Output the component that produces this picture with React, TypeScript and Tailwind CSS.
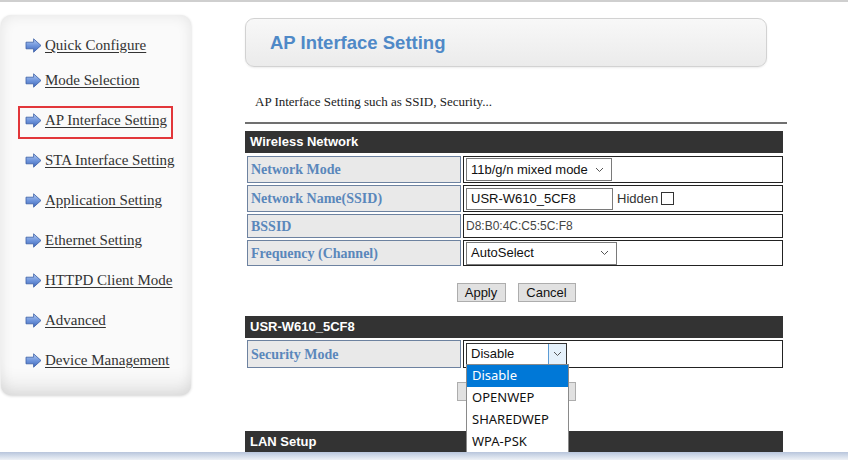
import React from "react";

const menu = [
  "Quick Configure",
  "Mode Selection",
  "AP Interface Setting",
  "STA Interface Setting",
  "Application Setting",
  "Ethernet Setting",
  "HTTPD Client Mode",
  "Advanced",
  "Device Management",
];

const Arrow = () => (
  <svg width="17" height="15" viewBox="0 0 17 15" className="shrink-0">
    <defs>
      <linearGradient id="arrowFill" x1="0" y1="0" x2="0" y2="1">
        <stop offset="0" stopColor="#b3cbf3" />
        <stop offset="0.5" stopColor="#7096dc" />
        <stop offset="1" stopColor="#3f68bd" />
      </linearGradient>
    </defs>
    <polygon
      points="1,4.2 8.6,4.2 8.6,0.8 16,7.5 8.6,14.2 8.6,10.8 1,10.8"
      fill="url(#arrowFill)"
      stroke="#3a5ea5"
      strokeWidth="0.8"
      strokeLinejoin="round"
    />
  </svg>
);

const Chevron = () => (
  <svg width="9" height="6" viewBox="0 0 9 6">
    <polyline points="1,1 4.5,4.5 8,1" fill="none" stroke="#555" strokeWidth="1" />
  </svg>
);

const serif = "font-['Liberation_Serif',serif]";
const sans = "font-['Liberation_Sans',Arial,sans-serif]";

const Bar = ({ title, className = "" }: { title: string; className?: string }) => (
  <div
    className={`h-[22px] bg-[#333333] flex items-center pl-[5px] text-white font-bold text-[13px] ${sans} ${className}`}
  >
    {title}
  </div>
);

const Row = ({
  label,
  h,
  children,
}: {
  label: string;
  h: string;
  children: React.ReactNode;
}) => (
  <div className={`flex pl-[2px] gap-[2px] ${h}`}>
    <div
      className={`w-[214px] bg-[#e9e9e9] border border-[#6d82a0] flex items-center pl-[3px] font-bold text-[14px] text-[#5a87bb] ${serif}`}
    >
      {label}
    </div>
    <div className="flex-1 border border-[#222] flex items-center pl-[2px]">{children}</div>
  </div>
);

const Select = ({ value, w }: { value: string; w: string }) => (
  <div
    className={`${w} h-[23px] border border-[#7a7a7a] bg-white flex items-center justify-between pl-[4px] pr-[7px] text-[13px] text-[#111] ${sans}`}
  >
    <span>{value}</span>
    <Chevron />
  </div>
);

// second pair sits behind the open dropdown, so its labels are not visible
const Buttons = ({ className = "", hidden = false }: { className?: string; hidden?: boolean }) => (
  <div className={`flex justify-center gap-[12px] pl-[4px] ${className}`}>
    <button className={`w-[49px] h-[19px] bg-[#e1e1e1] border border-[#adadad] text-[13px] leading-none text-[#111] ${sans}`}>
      {hidden ? "" : "Apply"}
    </button>
    <button className={`w-[58px] h-[19px] bg-[#e1e1e1] border border-[#adadad] text-[13px] leading-none text-[#111] ${sans}`}>
      {hidden ? "" : "Cancel"}
    </button>
  </div>
);

export default function App() {
  return (
    <div className="w-[848px] h-[460px] overflow-hidden bg-white flex flex-col">
      <div className="h-[2px] bg-[#cfcfcf] shrink-0" />

      <div className="flex-1 min-h-0 flex overflow-hidden">
        {/* sidebar */}
        <div className="w-[245px] shrink-0 pl-[1px] pt-[13px]">
          <div className="w-[190px] h-[380px] rounded-[10px] bg-[#fafafa] shadow-[inset_0_0_14px_rgba(0,0,0,0.09),inset_0_-26px_18px_-14px_rgba(0,0,0,0.07),0_1px_3px_rgba(0,0,0,0.18)] pt-[20px] flex flex-col gap-[20px]">
            {menu.map((item, idx) => (
              <div
                key={idx}
                className={`relative h-[20px] flex items-center pl-[24px] gap-[3px] ${idx === 0 ? "-mb-[5px]" : ""}`}
              >
                {idx === 2 && (
                  <div className="absolute left-[17px] top-[-4px] w-[155px] h-[33px] border-2 border-[#e2363a]" />
                )}
                <Arrow />
                <a className={`text-[15px] text-[#333] underline underline-offset-2 ${serif}`}>{item}</a>
              </div>
            ))}
          </div>
        </div>

        {/* content */}
        <div className="w-[542px] shrink-0 pt-[16px] flex flex-col">
          <div className="w-[522px] h-[49px] shrink-0 rounded-[9px] border border-[#d2d2d2] bg-gradient-to-b from-[#f8f8f8] to-[#ebebeb] shadow-[0_1px_2px_rgba(0,0,0,0.08)] flex items-center pl-[24px]">
            <h1 className={`text-[18.5px] font-bold text-[#4f89c7] ${sans}`}>AP Interface Setting</h1>
          </div>

          <p className={`mt-[28px] h-[14px] leading-[14px] pl-[10px] text-[13px] text-[#222] ${serif}`}>
            AP Interface Setting such as SSID, Security...
          </p>

          <div className="mt-[13px] h-[2px] bg-[#707070] shrink-0" />

          <div className="mt-[7px] w-[538px] flex flex-col">
            <Bar title="Wireless Network" className="h-[21px]" />
            <div className="mt-[3px] flex flex-col gap-[2px]">
              <Row label="Network Mode" h="h-[27px]">
                <Select value="11b/g/n mixed mode" w="w-[146px]" />
              </Row>
              <Row label="Network Name(SSID)" h="h-[27px]">
                <div className={`w-[147px] h-[22px] border border-[#7a7a7a] flex items-center px-[4px] text-[13px] text-[#111] ${sans}`}>
                  USR-W610_5CF8
                </div>
                <span className={`ml-[4px] text-[13px] text-[#333] ${sans}`}>Hidden</span>
                <div className="ml-[3px] w-[13px] h-[13px] border border-[#333] bg-white" />
              </Row>
              <Row label="BSSID" h="h-[24px]">
                <span className={`text-[12px] text-[#444] ${sans}`}>D8:B0:4C:C5:5C:F8</span>
              </Row>
              <Row label="Frequency (Channel)" h="h-[26px]">
                <Select value="AutoSelect" w="w-[151px]" />
              </Row>
            </div>

            <Buttons className="mt-[17px]" />

            <Bar title="USR-W610_5CF8" className="mt-[14px]" />
            <div className="mt-[2px]">
              <Row label="Security Mode" h="h-[28px]">
                <div className="relative">
                  <div className={`w-[101px] h-[22px] border border-[#333] bg-white flex items-center text-[13px] text-[#111] ${sans}`}>
                    <span className="flex-1 pl-[4px]">Disable</span>
                    <div className="w-[18px] h-full border-l border-[#5b9bd5] bg-[#e5f1fb] flex items-center justify-center">
                      <Chevron />
                    </div>
                  </div>
                  <div className="absolute left-0 top-[21px] z-10 w-[103px] bg-white border border-[#8a8a8a] flex flex-col font-['Noto_Sans',sans-serif] text-[13px] text-[#111]">
                    <div className="h-[22px] flex items-center pl-[5px] bg-[#0078d7] text-white">Disable</div>
                    <div className="h-[22px] flex items-center pl-[5px]">OPENWEP</div>
                    <div className="h-[22px] flex items-center pl-[5px]">SHAREDWEP</div>
                    <div className="h-[22px] flex items-center pl-[5px]">WPA-PSK</div>
                  </div>
                </div>
              </Row>
            </div>

            <Buttons className="mt-[14px]" hidden />

            <Bar title="LAN Setup" className="mt-[30px]" />
          </div>
        </div>
      </div>

      <div className="h-[8px] shrink-0 bg-gradient-to-b from-[#b8c5dc] via-[#d3dcea] to-[#eef1f6]" />
    </div>
  );
}
